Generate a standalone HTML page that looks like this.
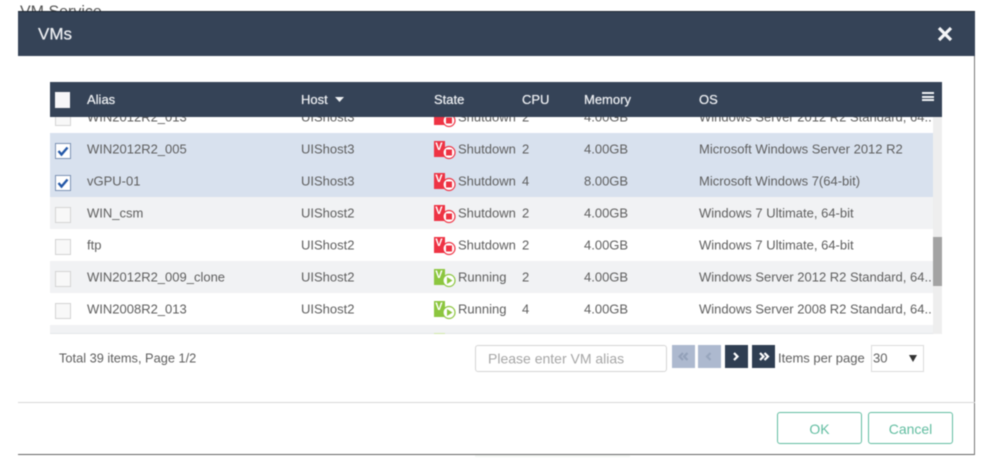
<!DOCTYPE html>
<html><head><meta charset="utf-8"><title>VMs</title>
<style>
html,body{margin:0;padding:0;background:#fff;}
body{width:989px;height:463px;overflow:hidden;position:relative;font-family:"Liberation Sans",sans-serif;font-size:13px;color:#5e5e5e;}
#w{position:absolute;left:0;top:0;width:989px;height:463px;filter:blur(.42px);}
#w div,#w svg{position:absolute;}
.t{white-space:nowrap;line-height:16px;transform:translateY(.6px);}
.r{left:50px;width:883px;height:32px;}
.b{background:#d8e1ee;}.g{background:#f1f2f4;}
.h{color:#eef0f3;font-size:13px;top:91.500px;white-space:nowrap;line-height:16px;text-shadow:0 0 .6px #eef0f3;}
.c{left:55px;width:14px;height:14px;border:1px solid #d4d4d4;background:#f8f8f8;}
.k{background:#fff;border:1px solid #7d93b4;}
.p{top:345px;width:23px;height:23px;}
.d{background:#2f3e52;}.l{background:#adb9cf;}
.btn{top:412px;width:83px;height:30px;border:1px solid #62bda1;border-radius:3px;color:#62bda1;font-size:14px;line-height:32px;text-align:center;background:#fff;}
</style></head><body><div id="w">

<div style="left:20px;top:0;width:90px;height:11px;overflow:hidden;"><div class="t" style="left:0;top:3px;color:#555;font-size:16px;line-height:18px;">VM Service</div></div>
<div style="left:18px;top:454px;width:957px;height:1px;background:#666;"></div>
<div style="left:475px;top:455px;width:155px;height:2px;background:#f3f6f4;"></div>
<div style="left:974px;top:29px;width:1px;height:426px;background:#777;"></div>
<div style="left:18px;top:11px;width:957px;height:45px;background:#354357;"></div>
<div style="left:18px;top:11px;width:957px;height:1px;background:#1e2733;"></div>
<div class="t" style="left:38px;top:24px;color:#eef0f3;font-size:17px;line-height:20px;text-shadow:0 0 .6px #eef0f3;">VMs</div>
<svg style="left:936px;top:25px" width="18" height="18" viewBox="0 0 18 18"><path d="M3 3L15 15M15 3L3 15" stroke="#f4f5f7" stroke-width="3.200" fill="none"/></svg>

<!-- rows -->
<div class="r" style="top:117px;height:16px;overflow:hidden;background:#fff;">
<div class="c" style="left:5px;top:-7px;"></div>
<div class="t" style="left:37px;top:-8px;">WIN2012R2_013</div>
<div class="t" style="left:251px;top:-8px;">UIShost3</div>
<div class="t" style="left:408px;top:-8px;">Shutdown</div>
<div class="t" style="left:472px;top:-8px;">2</div>
<div class="t" style="left:534px;top:-8px;">4.00GB</div>
<div class="t" style="left:649px;top:-8px;">Windows Server 2012 R2 Standard, 64..</div>
<svg style="left:384px;top:-8px" width="24" height="20" viewBox="0 0 24 20"><rect width="11" height="16" fill="#ee3344"/><circle cx="15" cy="11.500" r="6" fill="#fff" stroke="#ee3344" stroke-width="1.200"/><rect x="12" y="8.500" width="6" height="6" fill="#ee3344"/></svg>
</div>

<div class="r b" style="top:133px;"></div>
<div class="r b" style="top:165px;"></div>
<div class="r g" style="top:197px;"></div>
<div class="r g" style="top:261px;"></div>
<div class="r g" style="top:325px;height:9px;"></div>
<div style="left:50px;top:333px;width:892px;height:1px;background:#e4e6e8;"></div>

<!-- scrollbar -->
<div style="left:933px;top:117px;width:9px;height:217px;background:#eeeeee;"></div>
<div style="left:933px;top:237px;width:9px;height:49px;background:#a3a3a3;"></div>

<!-- header -->
<div style="left:50px;top:82px;width:892px;height:35px;background:#354357;"></div>
<div style="left:55px;top:92px;width:15px;height:16px;background:#f6f6f8;"></div>
<div class="h" style="left:87px;">Alias</div>
<div class="h" style="left:301px;">Host</div>
<svg style="left:335px;top:97px" width="9" height="5" viewBox="0 0 9 5"><path d="M0 0H9L4.500 5Z" fill="#f0f2f4"/></svg>
<div class="h" style="left:434px;">State</div>
<div class="h" style="left:522px;">CPU</div>
<div class="h" style="left:584px;">Memory</div>
<div class="h" style="left:699px;">OS</div>
<div style="left:922px;top:92px;width:12px;height:2px;background:#f0f2f4;"></div>
<div style="left:922px;top:95.500px;width:12px;height:2px;background:#f0f2f4;"></div>
<div style="left:922px;top:99px;width:12px;height:2px;background:#f0f2f4;"></div>

<!-- row 1 -->
<div class="c k" style="top:143px;"></div>
<svg style="left:56px;top:144px" width="14" height="14" viewBox="0 0 14 14"><path d="M2.500 7L5.500 10.500L11.500 3.500" stroke="#2458a8" stroke-width="2.400" fill="none"/></svg>
<div class="t" style="left:87px;top:141px;">WIN2012R2_005</div>
<div class="t" style="left:301px;top:141px;">UIShost3</div>
<svg style="left:434px;top:141px" width="24" height="20" viewBox="0 0 24 20"><rect width="11" height="16" fill="#ee3344"/><text x="1.200" y="9" font-family="Liberation Sans" font-size="11" font-weight="bold" fill="#fff">V</text><circle cx="15" cy="11.500" r="6" fill="#fff" stroke="#ee3344" stroke-width="1.200"/><rect x="12" y="8.500" width="6" height="6" fill="#ee3344"/></svg>
<div class="t" style="left:458px;top:141px;">Shutdown</div>
<div class="t" style="left:522px;top:141px;">2</div>
<div class="t" style="left:584px;top:141px;">4.00GB</div>
<div class="t" style="left:699px;top:141px;">Microsoft Windows Server 2012 R2</div>

<!-- row 2 -->
<div class="c k" style="top:175px;"></div>
<svg style="left:56px;top:176px" width="14" height="14" viewBox="0 0 14 14"><path d="M2.500 7L5.500 10.500L11.500 3.500" stroke="#2458a8" stroke-width="2.400" fill="none"/></svg>
<div class="t" style="left:87px;top:173px;">vGPU-01</div>
<div class="t" style="left:301px;top:173px;">UIShost3</div>
<svg style="left:434px;top:173px" width="24" height="20" viewBox="0 0 24 20"><rect width="11" height="16" fill="#ee3344"/><text x="1.200" y="9" font-family="Liberation Sans" font-size="11" font-weight="bold" fill="#fff">V</text><circle cx="15" cy="11.500" r="6" fill="#fff" stroke="#ee3344" stroke-width="1.200"/><rect x="12" y="8.500" width="6" height="6" fill="#ee3344"/></svg>
<div class="t" style="left:458px;top:173px;">Shutdown</div>
<div class="t" style="left:522px;top:173px;">4</div>
<div class="t" style="left:584px;top:173px;">8.00GB</div>
<div class="t" style="left:699px;top:173px;">Microsoft Windows 7(64-bit)</div>

<!-- row 3 -->
<div class="c" style="top:207px;"></div>
<div class="t" style="left:87px;top:205px;">WIN_csm</div>
<div class="t" style="left:301px;top:205px;">UIShost2</div>
<svg style="left:434px;top:205px" width="24" height="20" viewBox="0 0 24 20"><rect width="11" height="16" fill="#ee3344"/><text x="1.200" y="9" font-family="Liberation Sans" font-size="11" font-weight="bold" fill="#fff">V</text><circle cx="15" cy="11.500" r="6" fill="#fff" stroke="#ee3344" stroke-width="1.200"/><rect x="12" y="8.500" width="6" height="6" fill="#ee3344"/></svg>
<div class="t" style="left:458px;top:205px;">Shutdown</div>
<div class="t" style="left:522px;top:205px;">2</div>
<div class="t" style="left:584px;top:205px;">4.00GB</div>
<div class="t" style="left:699px;top:205px;">Windows 7 Ultimate, 64-bit</div>

<!-- row 4 -->
<div class="c" style="top:239px;"></div>
<div class="t" style="left:87px;top:237px;">ftp</div>
<div class="t" style="left:301px;top:237px;">UIShost2</div>
<svg style="left:434px;top:237px" width="24" height="20" viewBox="0 0 24 20"><rect width="11" height="16" fill="#ee3344"/><text x="1.200" y="9" font-family="Liberation Sans" font-size="11" font-weight="bold" fill="#fff">V</text><circle cx="15" cy="11.500" r="6" fill="#fff" stroke="#ee3344" stroke-width="1.200"/><rect x="12" y="8.500" width="6" height="6" fill="#ee3344"/></svg>
<div class="t" style="left:458px;top:237px;">Shutdown</div>
<div class="t" style="left:522px;top:237px;">2</div>
<div class="t" style="left:584px;top:237px;">4.00GB</div>
<div class="t" style="left:699px;top:237px;">Windows 7 Ultimate, 64-bit</div>

<!-- row 5 -->
<div class="c" style="top:271px;"></div>
<div class="t" style="left:87px;top:269px;">WIN2012R2_009_clone</div>
<div class="t" style="left:301px;top:269px;">UIShost2</div>
<svg style="left:434px;top:269px" width="24" height="20" viewBox="0 0 24 20"><rect width="11" height="16" fill="#8cc63f"/><text x="1.200" y="9" font-family="Liberation Sans" font-size="11" font-weight="bold" fill="#fff">V</text><circle cx="15" cy="11.500" r="6" fill="#fff" stroke="#8cc63f" stroke-width="1.200"/><path d="M13 8L18.500 11.500L13 15Z" fill="#8cc63f"/></svg>
<div class="t" style="left:458px;top:269px;">Running</div>
<div class="t" style="left:522px;top:269px;">2</div>
<div class="t" style="left:584px;top:269px;">4.00GB</div>
<div class="t" style="left:699px;top:269px;">Windows Server 2012 R2 Standard, 64..</div>

<!-- row 6 -->
<div class="c" style="top:303px;"></div>
<div class="t" style="left:87px;top:301px;">WIN2008R2_013</div>
<div class="t" style="left:301px;top:301px;">UIShost2</div>
<svg style="left:434px;top:301px" width="24" height="20" viewBox="0 0 24 20"><rect width="11" height="16" fill="#8cc63f"/><text x="1.200" y="9" font-family="Liberation Sans" font-size="11" font-weight="bold" fill="#fff">V</text><circle cx="15" cy="11.500" r="6" fill="#fff" stroke="#8cc63f" stroke-width="1.200"/><path d="M13 8L18.500 11.500L13 15Z" fill="#8cc63f"/></svg>
<div class="t" style="left:458px;top:301px;">Running</div>
<div class="t" style="left:522px;top:301px;">4</div>
<div class="t" style="left:584px;top:301px;">4.00GB</div>
<div class="t" style="left:699px;top:301px;">Windows Server 2008 R2 Standard, 64..</div>
<div style="left:434px;top:333px;width:11px;height:1px;background:#cfe6a8;"></div>

<!-- footer -->
<div class="t" style="left:59px;top:350px;font-size:12.800px;">Total 39 items, Page 1/2</div>
<div style="left:475px;top:345px;width:190px;height:25px;border:1px solid #d5d5d5;border-radius:3px;background:#fff;"></div>
<div class="t" style="left:488px;top:350px;color:#a6a6a6;font-size:14px;">Please enter VM alias</div>

<div class="p l" style="left:672px;"></div>
<div class="p l" style="left:698px;"></div>
<div class="p d" style="left:725px;"></div>
<div class="p d" style="left:752px;"></div>
<svg style="left:672px;top:345px" width="104" height="23" viewBox="0 0 104 23" fill="none" stroke-width="2.200">
<path d="M11 8L7.500 11.500L11 15M15.500 8L12 11.500L15.500 15" stroke="#93a1b9"/>
<path d="M38.500 8L35 11.500L38.500 15" stroke="#98a6bd"/>
<path d="M62 8L65.500 11.500L62 15" stroke="#fff"/>
<path d="M88 8L91.500 11.500L88 15M92.500 8L96 11.500L92.500 15" stroke="#fff"/>
</svg>
<div class="t" style="left:778px;top:350px;">Items per page</div>
<div style="left:871px;top:345px;width:51px;height:25px;border:1px solid #dcdcdc;background:#fff;"></div>
<div class="t" style="left:873px;top:350px;">30</div>
<svg style="left:909px;top:355px" width="8" height="7" viewBox="0 0 8 7"><path d="M0 0H8L4 7Z" fill="#333"/></svg>

<div style="left:18px;top:402px;width:957px;height:1px;background:#d8d8d8;"></div>
<div class="btn" style="left:777px;">OK</div>
<div class="btn" style="left:868px;">Cancel</div>
</div></body></html>
